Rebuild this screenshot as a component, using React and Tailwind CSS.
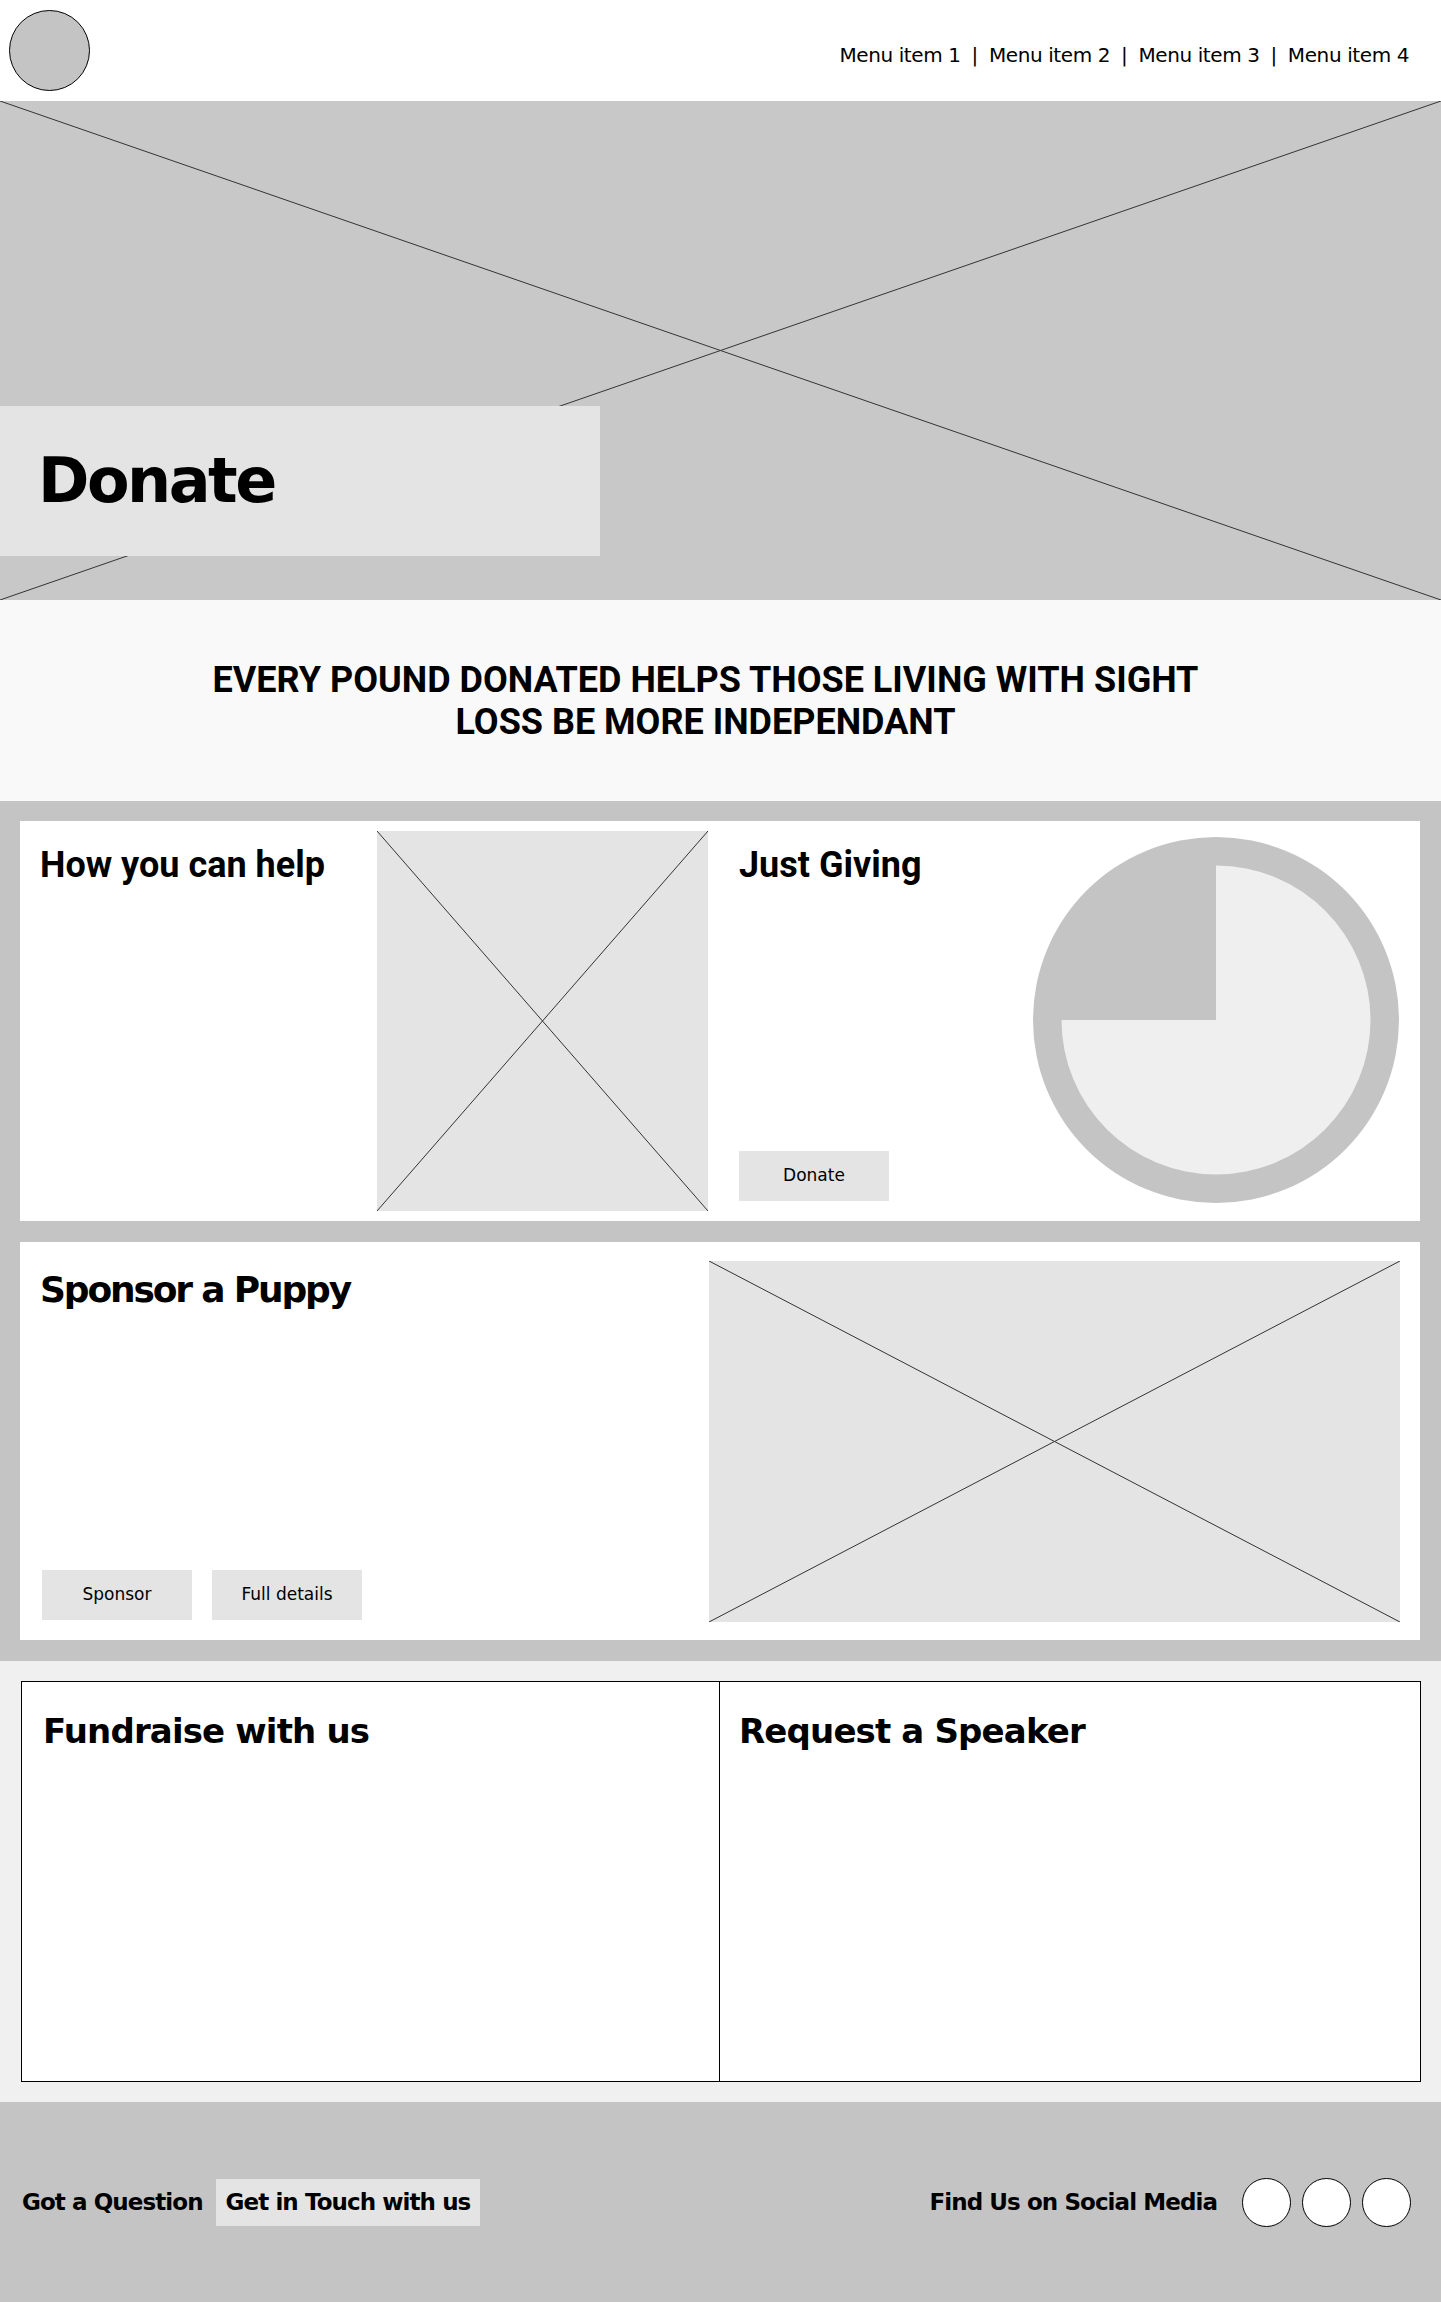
import React from "react";

const POP = "font-['DejaVu_Sans',sans-serif]";
const ROB = "font-['Roboto',sans-serif]";

function Placeholder({ className }) {
  return (
    <div className={"relative bg-[#e4e4e4] " + className}>
      <svg className="absolute inset-0 h-full w-full" preserveAspectRatio="none" viewBox="0 0 100 100">
        <line x1="0" y1="0" x2="100" y2="100" stroke="#333" strokeWidth="1" vectorEffect="non-scaling-stroke" />
        <line x1="0" y1="100" x2="100" y2="0" stroke="#333" strokeWidth="1" vectorEffect="non-scaling-stroke" />
      </svg>
    </div>
  );
}

function PieChart() {
  return (
    <svg width="366" height="366" viewBox="0 0 366 366" className="block">
      <circle cx="183" cy="183" r="183" fill="#c4c4c4" />
      <path d="M183 183 L183 28.5 A154.5 154.5 0 1 1 28.5 183 Z" fill="#efefef" />
    </svg>
  );
}

function GrayButton({ children, className = "" }) {
  return (
    <div className={`flex h-[50px] w-[150px] items-center justify-center bg-[#e4e4e4] text-[17px] text-black ${POP} ${className}`}>
      {children}
    </div>
  );
}

export default function App() {
  const items = ["Menu item 1", "Menu item 2", "Menu item 3", "Menu item 4"];
  return (
    <div className="w-[1441px] bg-white text-black">
      {/* Header */}
      <header className="flex h-[101px] items-center justify-between pl-[9px] pr-[32px]">
        <div className="h-[81px] w-[81px] rounded-full border border-black bg-[#c4c4c4]" />
        <nav className={`flex items-center gap-[11px] pt-[9px] text-[20px] tracking-[-0.02em] ${POP}`}>
          {items.map((t, i) => (
            <React.Fragment key={t}>
              {i > 0 && <span>|</span>}
              <span>{t}</span>
            </React.Fragment>
          ))}
        </nav>
      </header>

      {/* Hero */}
      <section className="relative flex h-[499px] flex-col bg-[#c8c8c8] pt-[305px]">
        <svg className="absolute inset-0 h-full w-full" preserveAspectRatio="none" viewBox="0 0 100 100">
          <line x1="0" y1="0" x2="100" y2="100" stroke="#333" strokeWidth="1" vectorEffect="non-scaling-stroke" />
          <line x1="0" y1="100" x2="100" y2="0" stroke="#333" strokeWidth="1" vectorEffect="non-scaling-stroke" />
        </svg>
        <div className="relative flex h-[150px] w-[600px] items-center bg-[#e4e4e4] pl-[38px]">
          <h1 className={`text-[62px] font-bold leading-none tracking-[-0.04em] ${POP}`}>Donate</h1>
        </div>
      </section>

      {/* Tagline */}
      <section className="flex h-[201px] items-center justify-center bg-[#f9f9f9] pr-[30px]">
        <p className={`text-center text-[36px] font-bold leading-[42px] ${ROB}`}>
          EVERY POUND DONATED HELPS THOSE LIVING WITH SIGHT
          <br />
          LOSS BE MORE INDEPENDANT
        </p>
      </section>

      {/* Cards */}
      <section className="flex flex-col gap-[21px] bg-[#c4c4c4] pb-[21px] pl-[20px] pr-[21px] pt-[20px]">
        <div className="flex h-[400px] bg-white py-[10px] pl-[20px] pr-[21px]">
          <div className="w-[337px] pt-[7px]">
            <h2 className={`text-[36px] font-bold ${ROB}`}>How you can help</h2>
          </div>
          <Placeholder className="h-[380px] w-[331px]" />
          <div className="ml-[31px] flex flex-1 flex-col justify-between pb-[10px] pt-[7px]">
            <h2 className={`text-[36px] font-bold ${ROB}`}>Just Giving</h2>
            <GrayButton>Donate</GrayButton>
          </div>
          <div className="mt-[6px] self-start">
            <PieChart />
          </div>
        </div>

        <div className="flex h-[398px] bg-white">
          <div className="flex flex-1 flex-col justify-between pb-[20px] pl-[20px] pt-[21px]">
            <h2 className={`text-[36px] font-bold tracking-[-0.06em] ${POP}`}>Sponsor a Puppy</h2>
            <div className="ml-[2px] flex gap-[20px]">
              <GrayButton>Sponsor</GrayButton>
              <GrayButton>Full details</GrayButton>
            </div>
          </div>
          <Placeholder className="mr-[20px] mt-[19px] h-[361px] w-[691px]" />
        </div>
      </section>

      {/* Fundraise / Speaker */}
      <section className="flex bg-[#f0f0f0] py-[20px] pl-[21px] pr-[20px]">
        <div className="h-[401px] w-[700px] border border-black bg-white pl-[21px] pt-[24px]">
          <h2 className={`text-[34px] font-bold tracking-[-0.025em] ${POP}`}>Fundraise with us</h2>
        </div>
        <div className="-ml-[2px] h-[401px] flex-1 border border-black bg-white pl-[19px] pt-[24px]">
          <h2 className={`text-[34px] font-bold tracking-[-0.025em] ${POP}`}>Request a Speaker</h2>
        </div>
      </section>

      {/* Footer */}
      <footer className={`flex h-[200px] items-center justify-between bg-[#c4c4c4] pl-[22px] pr-[30px] ${POP}`}>
        <div className="flex items-center gap-[13px]">
          <span className="text-[23px] font-bold tracking-[-0.04em]">Got a Question</span>
          <span className="flex h-[47px] items-center bg-[#e4e4e4] px-[10px] text-[23px] font-bold tracking-[-0.04em]">
            Get in Touch with us
          </span>
        </div>
        <div className="flex items-center">
          <span className="mr-[25px] text-[23px] font-bold tracking-[-0.04em]">Find Us on Social Media</span>
          <div className="flex gap-[11px]">
            <div className="h-[49px] w-[49px] rounded-full border border-black bg-white" />
            <div className="h-[49px] w-[49px] rounded-full border border-black bg-white" />
            <div className="h-[49px] w-[49px] rounded-full border border-black bg-white" />
          </div>
        </div>
      </footer>
    </div>
  );
}
